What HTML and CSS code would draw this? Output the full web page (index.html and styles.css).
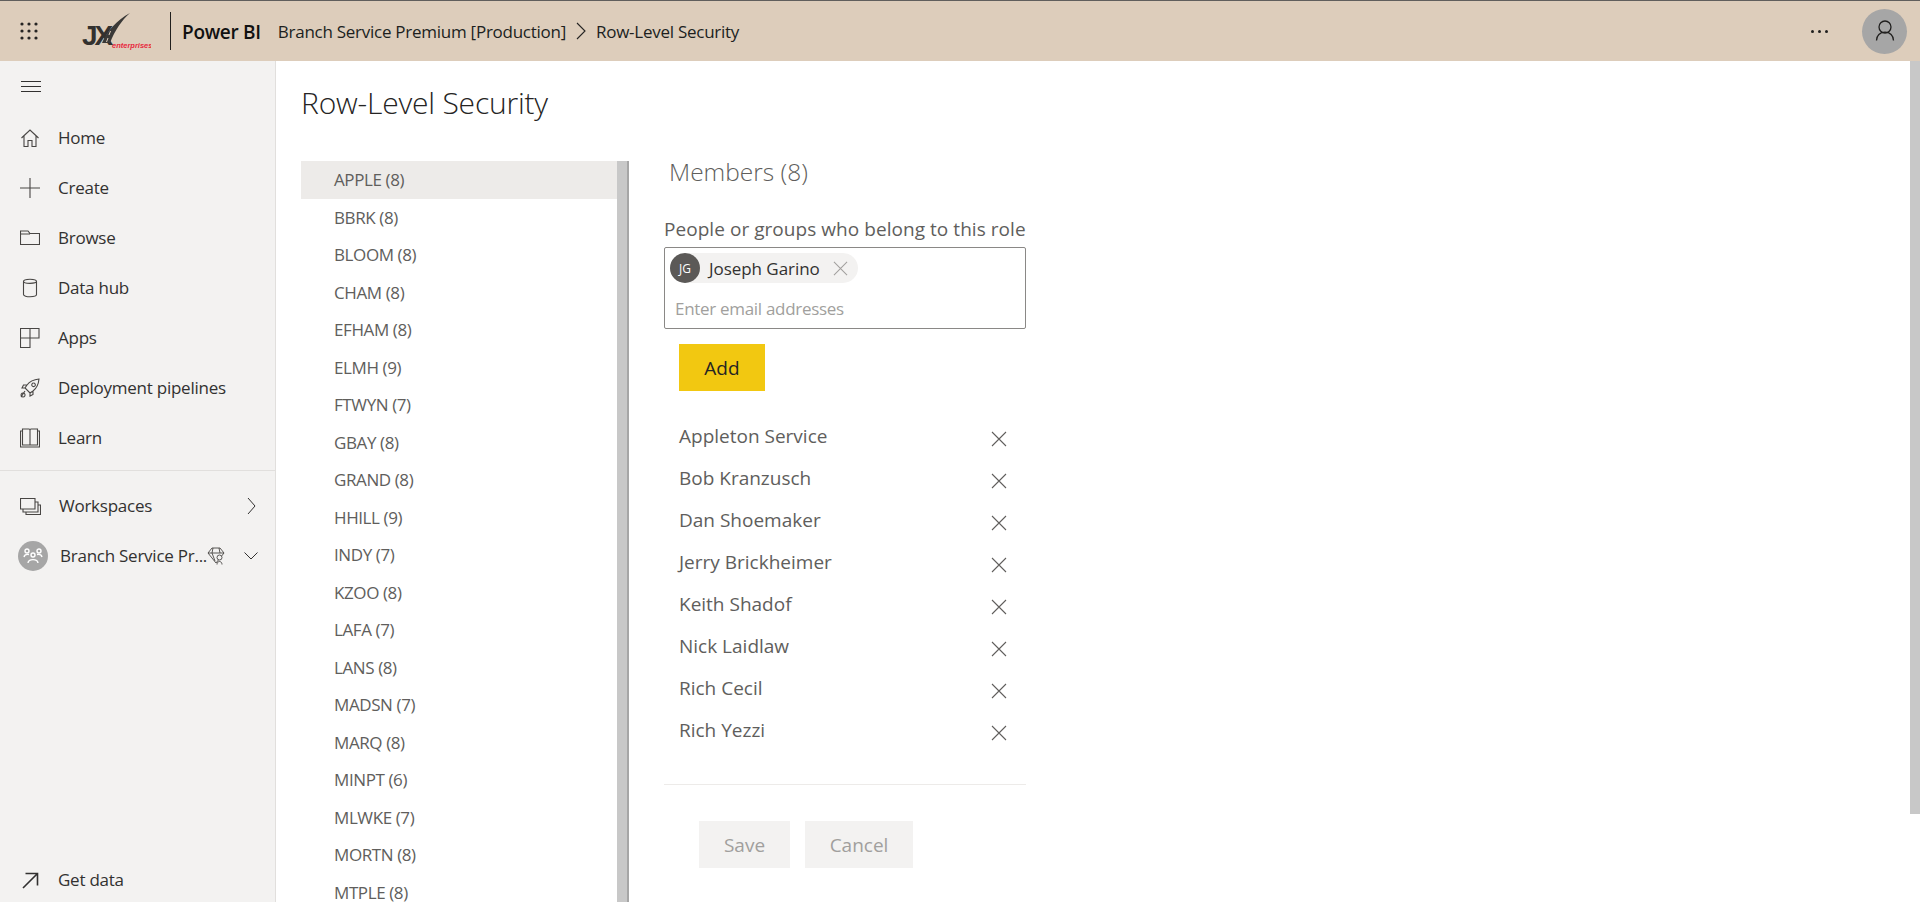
FILE: index.html
```html
<!DOCTYPE html>
<html lang="en">
<head>
<meta charset="utf-8">
<title>Row-Level Security</title>
<link rel="stylesheet" href="styles.css">
</head>
<body>
<header class="topbar">
  <svg class="waffle" viewBox="0 0 18 18" width="18" height="18"><g fill="#252423"><circle cx="2" cy="2" r="1.6"/><circle cx="9" cy="2" r="1.6"/><circle cx="16" cy="2" r="1.6"/><circle cx="2" cy="9" r="1.6"/><circle cx="9" cy="9" r="1.6"/><circle cx="16" cy="9" r="1.6"/><circle cx="2" cy="16" r="1.6"/><circle cx="9" cy="16" r="1.6"/><circle cx="16" cy="16" r="1.6"/></g></svg>
  <svg class="logo" viewBox="0 0 70 38" width="70" height="38">
    <text x="1" y="33" class="logo-jx">JX</text>
    <path d="M21 31 C26 19 36 8 49 1 C41 8 34 18 29 31 Z" fill="#3a3937"/>
    <path d="M25.500 30 L27 26 M28 23 L29.500 19" stroke="#ddcdbb" stroke-width="1" fill="none"/>
    <text x="31" y="36" class="logo-ent">enterprises</text>
  </svg>
  <span class="divider"></span>
  <span class="product">Power BI</span>
  <span class="crumb">Branch Service Premium [Production]</span>
  <svg class="crumb-chev" viewBox="0 0 10 18" width="10" height="18"><path d="M1 1 L9 9 L1 17" fill="none" stroke="#252423" stroke-width="1.1"/></svg>
  <span class="crumb">Row-Level Security</span>
  <span class="more">
    <i></i><i></i><i></i>
  </span>
  <span class="me">
    <svg viewBox="0 0 20 22" width="20" height="22"><g fill="none" stroke="#201f1e" stroke-width="1.3"><circle cx="10" cy="7" r="6"/><path d="M1.5 20.5 C1.5 15.5 5 12.2 10 12.2 C15 12.2 18.5 15.5 18.5 20.5"/></g></svg>
  </span>
</header>

<div class="shell">
  <nav class="sidebar">
    <button class="burger" aria-label="Menu"><span></span><span></span><span></span></button>
    <ul class="nav">
      <li class="nav-item">
        <svg class="ico" viewBox="0 0 20 20"><path d="M1.5 10 L10 2 L18.500 10 M4 8 V18.500 H8 V12.500 H12 V18.500 H16 V8"/></svg>
        <span>Home</span>
      </li>
      <li class="nav-item">
        <svg class="ico" viewBox="0 0 20 20"><path d="M10 0 V20 M0 10 H20"/></svg>
        <span>Create</span>
      </li>
      <li class="nav-item">
        <svg class="ico" viewBox="0 0 20 20"><path d="M0.500 3 H8 L10 5.500 H19.500 V16.500 H0.500 Z M0.500 6 H10 "/></svg>
        <span>Browse</span>
      </li>
      <li class="nav-item">
        <svg class="ico" viewBox="0 0 20 20"><path d="M3.500 3.500 C3.500 0.500 16.500 0.500 16.500 3.500 V16.500 C16.500 19.500 3.500 19.500 3.500 16.500 Z M3.500 3.500 C3.500 6 16.500 6 16.500 3.500"/></svg>
        <span>Data hub</span>
      </li>
      <li class="nav-item">
        <svg class="ico" viewBox="0 0 20 20"><path d="M0.500 0.500 H19 V10 H10 V19.500 H0.500 Z M0.500 10 H10 V0.500"/></svg>
        <span>Apps</span>
      </li>
      <li class="nav-item">
        <svg class="ico" viewBox="0 0 20 20"><path d="M7 7 C10 3 14 1.500 19 1 C18.500 6 17 10 13 13 L10 15 L5 10 Z M13.500 5 A1.800 1.800 0 1 0 13.600 5 M7 7 H3.500 L2 10 H5 M13 13 V16.500 L10 18 V15 M5 13 L1 19 M3 15 A2 2 0 1 0 3.100 15"/></svg>
        <span>Deployment pipelines</span>
      </li>
      <li class="nav-item">
        <svg class="ico" viewBox="0 0 20 20"><path d="M2.500 1 H9 Q10 1 10 2.500 V17 H2.500 Z M17.500 1 H11 Q10 1 10 2.500 V17 H17.500 Z M2.500 3 H0.500 V19 H19.500 V3 H17.500"/></svg>
        <span>Learn</span>
      </li>
    </ul>
    <div class="nav-sep"></div>
    <div class="nav-item ws">
      <svg class="ico ico-ws" viewBox="0 0 21 17"><path d="M0.500 0.500 H15 V11 H0.500 Z M15 4 H18 V14 H3 V11 M18 7 H20.500 V16.500 H6 V14"/></svg>
      <span class="ws-label">Workspaces</span>
      <svg class="chev-r" viewBox="0 0 9 18"><path d="M1 1 L8 9 L1 17"/></svg>
    </div>
    <div class="nav-item ws-current">
      <span class="ws-avatar">
        <svg viewBox="0 0 20 16" width="20" height="16"><g fill="none" stroke="#fff" stroke-width="1.400"><circle cx="4" cy="3" r="2"/><circle cx="16" cy="3" r="2"/><circle cx="10" cy="7" r="2"/><path d="M1 9 C1.500 6.500 3 6 6 6.500 M19 9 C18.500 6.500 17 6 14 6.500 M5 15 C5.500 10.500 14.500 10.500 15 15"/></g></svg>
      </span>
      <span class="ws-name">Branch Service Pr...</span>
      <svg class="diamond" viewBox="0 0 18 18"><path d="M1 6 L5 1 H13 L17 6 L9 16 Z M1 6 H17 M6 1 L5 6 L8 14 M12 1 L13 6"/><circle cx="12.500" cy="10.500" r="2.500" fill="#f3f2f1"/><path d="M10 17.500 C10 13.500 15 13.500 15 17.500" fill="#f3f2f1"/></svg>
      <svg class="chev-d" viewBox="0 0 14 8"><path d="M0.500 0.500 L7 7 L13.500 0.500"/></svg>
    </div>
    <div class="nav-item get-data">
      <svg class="ico ico-arrow" viewBox="0 0 17 17"><path d="M1 16 L15.500 1.500 M3.500 1.500 H15.500 V13.500"/></svg>
      <span>Get data</span>
    </div>
  </nav>

  <main class="content">
    <div class="page">
      <h1 class="title">Row-Level Security</h1>
      <div class="panels">
        <div class="roles">
          <ul class="role-list">
            <li class="role selected">APPLE (8)</li>
            <li class="role">BBRK (8)</li>
            <li class="role">BLOOM (8)</li>
            <li class="role">CHAM (8)</li>
            <li class="role">EFHAM (8)</li>
            <li class="role">ELMH (9)</li>
            <li class="role">FTWYN (7)</li>
            <li class="role">GBAY (8)</li>
            <li class="role">GRAND (8)</li>
            <li class="role">HHILL (9)</li>
            <li class="role">INDY (7)</li>
            <li class="role">KZOO (8)</li>
            <li class="role">LAFA (7)</li>
            <li class="role">LANS (8)</li>
            <li class="role">MADSN (7)</li>
            <li class="role">MARQ (8)</li>
            <li class="role">MINPT (6)</li>
            <li class="role">MLWKE (7)</li>
            <li class="role">MORTN (8)</li>
            <li class="role">MTPLE (8)</li>
          </ul>
          <div class="role-scroll"></div>
        </div>
        <section class="members">
          <h2 class="members-title">Members (8)</h2>
          <label class="field-label">People or groups who belong to this role</label>
          <div class="picker">
            <div class="chip">
              <span class="chip-av">JG</span>
              <span class="chip-name">Joseph Garino</span>
              <svg class="chip-x" viewBox="0 0 16 16"><path d="M1 1 L15 15 M15 1 L1 15"/></svg>
            </div>
            <div class="placeholder">Enter email addresses</div>
          </div>
          <button class="btn-add">Add</button>
          <ul class="member-list">
            <li class="member"><span>Appleton Service</span><svg class="x" viewBox="0 0 16 16"><path d="M1 1 L15 15 M15 1 L1 15"/></svg></li>
            <li class="member"><span>Bob Kranzusch</span><svg class="x" viewBox="0 0 16 16"><path d="M1 1 L15 15 M15 1 L1 15"/></svg></li>
            <li class="member"><span>Dan Shoemaker</span><svg class="x" viewBox="0 0 16 16"><path d="M1 1 L15 15 M15 1 L1 15"/></svg></li>
            <li class="member"><span>Jerry Brickheimer</span><svg class="x" viewBox="0 0 16 16"><path d="M1 1 L15 15 M15 1 L1 15"/></svg></li>
            <li class="member"><span>Keith Shadof</span><svg class="x" viewBox="0 0 16 16"><path d="M1 1 L15 15 M15 1 L1 15"/></svg></li>
            <li class="member"><span>Nick Laidlaw</span><svg class="x" viewBox="0 0 16 16"><path d="M1 1 L15 15 M15 1 L1 15"/></svg></li>
            <li class="member"><span>Rich Cecil</span><svg class="x" viewBox="0 0 16 16"><path d="M1 1 L15 15 M15 1 L1 15"/></svg></li>
            <li class="member"><span>Rich Yezzi</span><svg class="x" viewBox="0 0 16 16"><path d="M1 1 L15 15 M15 1 L1 15"/></svg></li>
          </ul>
          <div class="rule"></div>
          <div class="actions">
            <button class="btn-off btn-save">Save</button>
            <button class="btn-off btn-cancel">Cancel</button>
          </div>
        </section>
      </div>
    </div>
    <div class="page-scroll"></div>
  </main>
</div>
</body>
</html>
```

FILE: styles.css
```css
* { box-sizing: border-box; }
html, body { margin: 0; height: 100%; overflow: hidden; }
body {
  font-family: "Open Sans", "Noto Sans", sans-serif;
  font-size: 17px;
  color: #323130;
  background: #fff;
  display: flex;
  flex-direction: column;
}
ul { list-style: none; margin: 0; padding: 0; }
button { font-family: inherit; border: 0; padding: 0; }
h1, h2 { margin: 0; font-weight: 300; }

/* top bar */
.topbar {
  height: 61px;
  flex: none;
  background: #ddcdbb;
  border-top: 1px solid #605e5c;
  display: flex;
  align-items: center;
  padding-left: 20px;
  color: #201f1e;
}
.waffle { flex: none; }
.logo { flex: none; margin-left: 43px; }
.logo-jx { font-family: "Liberation Sans", sans-serif; font-weight: 700; font-size: 28px; letter-spacing: -3px; fill: #33312f; }
.logo-ent { font-family: "Liberation Sans", sans-serif; font-weight: 700; font-style: italic; font-size: 7.500px; fill: #e8283c; }
.divider { width: 1px; height: 38px; background: #201f1e; margin-left: 19px; flex: none; }
.product { margin-left: 11px; margin-top: 2px; font-size: 19px; font-weight: 600; letter-spacing: -0.300px; color: #111; }
.crumb { font-size: 17px; letter-spacing: -0.260px; margin-top: 1px; }
.product + .crumb { margin-left: 17px; }
.crumb-chev { margin: 0 10px; flex: none; }
.more { margin-left: auto; display: flex; gap: 4px; margin-right: 34px; }
.more i { width: 3px; height: 3px; border-radius: 50%; background: #201f1e; }
.me {
  width: 45px; height: 45px; border-radius: 50%;
  background: #a6a6a6;
  display: flex; align-items: center; justify-content: center;
  margin-right: 13px;
}

/* shell */
.shell { flex: 1; min-height: 0; display: flex; }

/* sidebar */
.sidebar {
  width: 276px;
  flex: none;
  background: #f3f2f1;
  border-right: 1px solid #e1dfdd;
  display: flex;
  flex-direction: column;
}
.burger {
  background: none;
  width: 20px;
  margin: 20px 0 0 21px;
  height: 11px;
  display: flex;
  flex-direction: column;
  justify-content: space-between;
  flex: none;
}
.burger span { display: block; height: 1px; background: #323130; }
.nav { margin-top: 21px; }
.nav-item {
  height: 50px;
  display: flex;
  align-items: center;
  padding-left: 20px;
  color: #323130;
  letter-spacing: -0.250px;
}
.nav-item > span { margin-top: -1px; }
.ico {
  width: 20px; height: 20px; flex: none;
  fill: none; stroke: #484644; stroke-width: 1.100;
  margin-right: 18px;
}
.nav-sep { height: 1px; background: #e1dfdd; margin-top: 7px; flex: none; }
.ws { margin-top: 10px; }
.ico-ws { width: 21px; height: 17px; margin-right: 18px; }
.nav-item > .ws-label { flex: 1; }
.chev-r { width: 9px; height: 18px; fill: none; stroke: #323130; stroke-width: 1; margin-right: 19px; flex: none; }
.ws-current { padding-left: 18px; }
.nav-item > .ws-avatar {
  width: 30px; height: 30px; border-radius: 50%;
  background: #a6a6a6; flex: none;
  display: flex; align-items: center; justify-content: center;
  margin: 0 12px 0 0;
}
.ws-name { width: 147px; white-space: nowrap; }
.diamond { width: 18px; height: 18px; fill: none; stroke: #484644; stroke-width: 0.900; flex: none; }
.chev-d { width: 14px; height: 8px; fill: none; stroke: #323130; stroke-width: 1; margin-left: 19px; flex: none; }
.get-data { margin-top: auto; margin-bottom: -3px; padding-left: 22px; flex: none; }
.ico-arrow { width: 17px; height: 17px; stroke-width: 1.600; stroke: #323130; margin-right: 19px; }

/* content */
.content { flex: 1; min-width: 0; display: flex; }
.page { flex: 1; min-width: 0; padding-left: 25px; display: flex; flex-direction: column; }
.title { font-size: 30px; line-height: 38px; margin-top: 23px; color: #252423; letter-spacing: -0.200px; font-weight: 300; }
.panels { flex: 1; min-height: 0; display: flex; margin-top: 39px; }
.page-scroll { width: 10px; height: 753px; background: #c8c8c8; flex: none; }

/* role list */
.roles { display: flex; flex: none; overflow: hidden; }
.role-list { width: 316px; }
.role {
  height: 37.500px;
  line-height: 37.500px;
  padding-left: 33px;
  font-size: 17px;
  letter-spacing: -0.400px;
  color: #605e5c;
}
.role.selected { background: #edebe9; }
.role-scroll { width: 12px; background: #c8c8c8; border-right: 2px solid #a6a6a6; }

/* members */
.members { width: 362px; margin-left: 35px; flex: none; }
.members-title { font-size: 24.500px; line-height: 30px; margin-top: -4px; padding-left: 5px; color: #605e5c; }
.field-label { display: block; margin-top: 30px; font-size: 19px; line-height: 24px; color: #605e5c; white-space: nowrap; letter-spacing: 0.050px; }
.picker {
  height: 82px;
  margin-top: 6px;
  border: 1px solid #8a8886;
  border-radius: 2px;
  padding: 5px;
}
.chip {
  width: 188px; height: 30px;
  background: #f3f2f1;
  border-radius: 15px;
  display: flex; align-items: center;
}
.chip-av {
  width: 30px; height: 30px; border-radius: 50%;
  background: #5b5957; color: #fff;
  font-size: 12px; display: flex; align-items: center; justify-content: center;
  flex: none;
}
.chip-name { margin-left: 9px; width: 124px; color: #323130; letter-spacing: -0.050px; white-space: nowrap; }
.chip-x { width: 15px; height: 15px; fill: none; stroke: #a19f9d; stroke-width: 1.100; flex: none; }
.placeholder { margin-top: 14px; padding-left: 5px; font-size: 17px; line-height: 24px; color: #a19f9d; letter-spacing: -0.300px; }
.btn-add {
  display: block;
  width: 86px; height: 47px;
  margin: 15px 0 0 15px;
  background: #f2c811;
  color: #252423;
  font-size: 19px;
}
.member-list { margin-top: 24px; padding: 0 15px; }
.member {
  height: 42px;
  display: flex;
  align-items: center;
  justify-content: space-between;
  font-size: 19px;
  color: #605e5c;
  padding-right: 4px;
}
.x { width: 16px; height: 16px; fill: none; stroke: #605e5c; stroke-width: 1.100; flex: none; margin-top: 6px; }
.rule { height: 1px; margin-top: 33px; background: #edebe9; }
.actions { display: flex; gap: 15px; margin: 36px 0 0 35px; }
.btn-off { height: 47px; padding-top: 1px; background: #f3f2f1; color: #a19f9d; font-size: 19px; }
.btn-save { width: 91px; }
.btn-cancel { width: 108px; }
```
